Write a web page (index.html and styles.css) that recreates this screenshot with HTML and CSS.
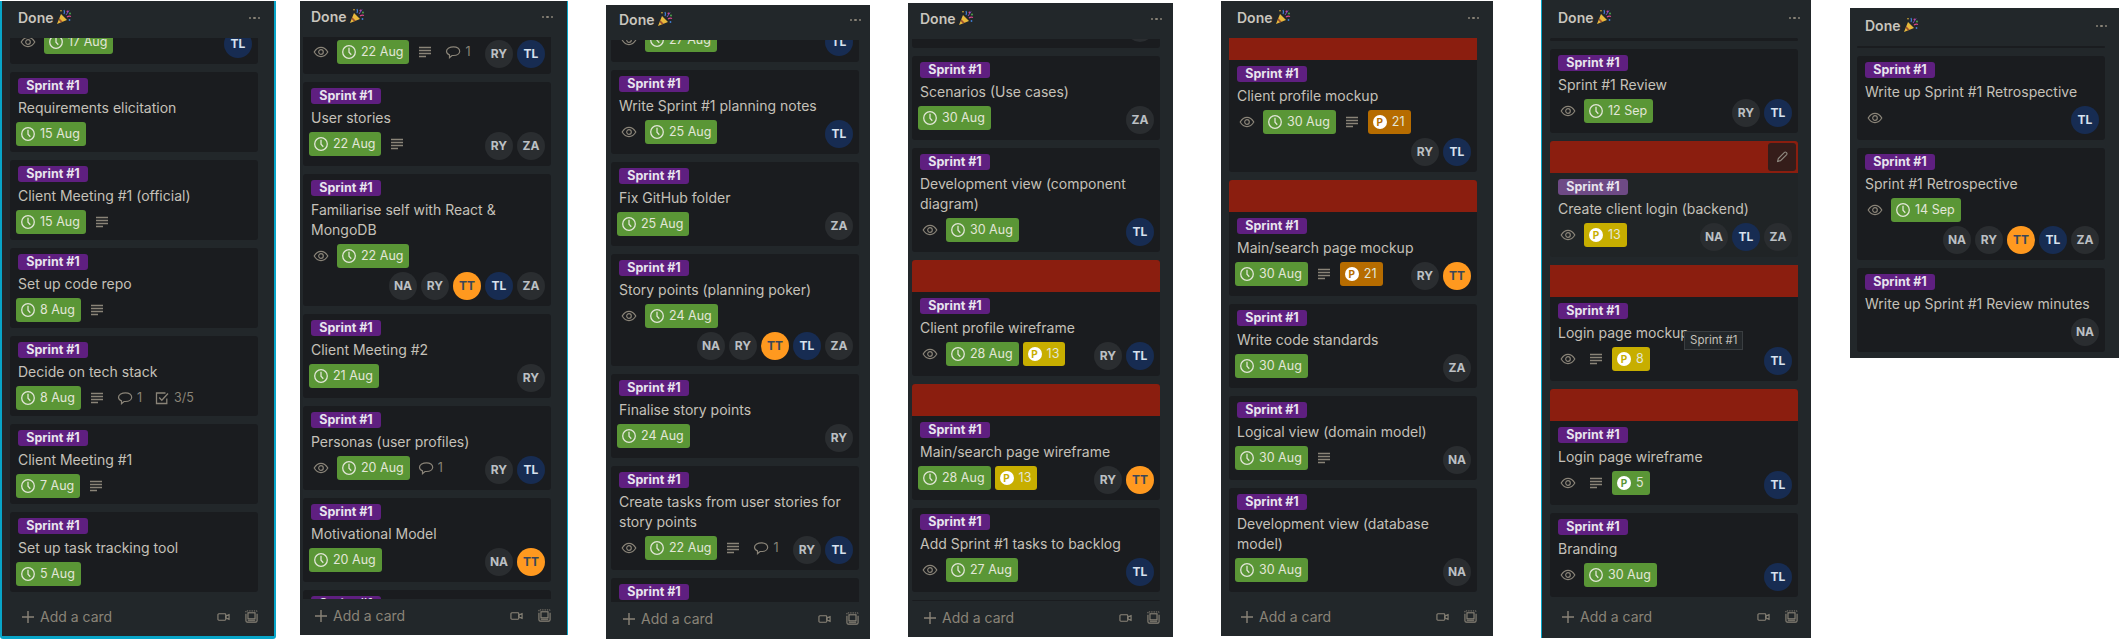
FILE: index.html
```html
<!DOCTYPE html>
<html lang="en">
<head>
    <meta charset="UTF-8">
    <meta name="viewport" content="width=device-width, initial-scale=1.0">
    <title>Done lists</title>
    <link rel="stylesheet" href="styles.css">
</head>
<body>
    <svg class="sprites" aria-hidden="true">
        <symbol id="i-eye" viewBox="0 0 16 16"><path d="M1.2 8C3 5 5.3 3.4 8 3.4S13 5 14.8 8C13 11 10.700 12.600 8 12.600S3 11 1.200 8z" fill="none" stroke="currentColor" stroke-width="1.200"/><circle cx="8" cy="8" r="2.300" fill="none" stroke="currentColor" stroke-width="1.200"/></symbol>
        <symbol id="i-clock" viewBox="0 0 16 16"><circle cx="8" cy="8" r="6.300" fill="none" stroke="currentColor" stroke-width="1.300"/><path d="M8 3.800V8.300L10.300 10.700" fill="none" stroke="currentColor" stroke-width="1.300"/></symbol>
        <symbol id="i-desc" viewBox="0 0 16 16"><path d="M2 3.500H14M2 6.500H14M2 9.500H14M2 12.500H9" fill="none" stroke="currentColor" stroke-width="1.300"/></symbol>
        <symbol id="i-comment" viewBox="0 0 16 16"><path d="M8.500 2.800C12 2.800 14.700 4.600 14.700 7.200S12 11.500 8.500 11.500H7L4.500 13.700V10.900C2.700 10.200 1.500 8.800 1.500 7.200 1.500 4.600 5 2.800 8.500 2.800z" fill="none" stroke="currentColor" stroke-width="1.200"/></symbol>
        <symbol id="i-check" viewBox="0 0 16 16"><path d="M12.800 8.500V13.500H2.500V3H11.500" fill="none" stroke="currentColor" stroke-width="1.300"/><path d="M5.200 7.500L7.800 10.200L14 3.500" fill="none" stroke="currentColor" stroke-width="1.300"/></symbol>
        <symbol id="i-plus" viewBox="0 0 12 12"><path d="M6 0V12M0 6H12" fill="none" stroke="currentColor" stroke-width="1.400"/></symbol>
        <symbol id="i-video" viewBox="0 0 14 10"><rect x="1" y="1.500" width="8.500" height="7" rx="1" fill="none" stroke="currentColor" stroke-width="1.200"/><path d="M9.500 4L13 2.500V7.500L9.500 6z" fill="none" stroke="currentColor" stroke-width="1.200"/></symbol>
        <symbol id="i-template" viewBox="0 0 14 14"><path d="M1 4V11.500Q1 13 2.500 13H11.500Q13 13 13 11.500V4" fill="none" stroke="currentColor" stroke-width="1.200"/><rect x="3.200" y="3" width="7.600" height="6.500" fill="none" stroke="currentColor" stroke-width="1.200"/><path d="M3 11H11" stroke="currentColor" stroke-width="1.200"/><path d="M1 2.500V1H13V2.500" fill="none" stroke="currentColor" stroke-width="1" stroke-dasharray="1.500 1"/></symbol>
        <symbol id="i-pencil" viewBox="0 0 16 16"><path d="M3 13L3.800 9.700L10.800 2.700Q11.700 1.900 12.700 2.700L13.300 3.300Q14.100 4.200 13.300 5.200L6.300 12.200z" fill="none" stroke="currentColor" stroke-width="1.300"/></symbol>
        <symbol id="i-popper" viewBox="0 0 16 16"><path d="M1 15L5 5L11 11z" fill="#e8b93c"/><path d="M3.300 9.300L6.700 12.700L4.900 13.400L2.600 11.100z" fill="#a0522d"/><path d="M8 5Q9 3 8 1" fill="none" stroke="#3f7fd6" stroke-width="1.200"/><path d="M11 8Q13 6.500 15 7.500" fill="none" stroke="#d8478a" stroke-width="1.200"/><circle cx="11.500" cy="2.500" r="1" fill="#d8478a"/><circle cx="14" cy="4.500" r=".900" fill="#4caf50"/><circle cx="5" cy="1.800" r=".800" fill="#e8b93c"/><circle cx="13.500" cy="11" r=".900" fill="#3f7fd6"/><path d="M10 6L13 1.500" stroke="#7a4fc0" stroke-width="1"/></symbol>
    </svg>

    <main class="board">
        <section class="list list-1">
            <header class="list-head"><h2>Done</h2><svg class="popper"><use href="#i-popper"/></svg><span class="dots"><i></i><i></i><i></i></span></header>
            <div class="cards">
                <div class="card card-cut cut-1">
                    <div class="foot">
                        <div class="badges"><span class="icon"><svg><use href="#i-eye"/></svg></span><span class="badge date"><svg><use href="#i-clock"/></svg>17 Aug</span></div>
                        <div class="members"><span class="avatar tl">TL</span></div>
                    </div>
                </div>
                <div class="card">
                    <span class="pill">Sprint #1</span>
                    <p class="title">Requirements elicitation</p>
                    <div class="foot"><div class="badges"><span class="badge date"><svg><use href="#i-clock"/></svg>15 Aug</span></div></div>
                </div>
                <div class="card">
                    <span class="pill">Sprint #1</span>
                    <p class="title">Client Meeting #1 (official)</p>
                    <div class="foot"><div class="badges"><span class="badge date"><svg><use href="#i-clock"/></svg>15 Aug</span><span class="icon"><svg><use href="#i-desc"/></svg></span></div></div>
                </div>
                <div class="card">
                    <span class="pill">Sprint #1</span>
                    <p class="title">Set up code repo</p>
                    <div class="foot"><div class="badges"><span class="badge date"><svg><use href="#i-clock"/></svg>8 Aug</span><span class="icon"><svg><use href="#i-desc"/></svg></span></div></div>
                </div>
                <div class="card">
                    <span class="pill">Sprint #1</span>
                    <p class="title">Decide on tech stack</p>
                    <div class="foot"><div class="badges"><span class="badge date"><svg><use href="#i-clock"/></svg>8 Aug</span><span class="icon"><svg><use href="#i-desc"/></svg></span><span class="count"><svg><use href="#i-comment"/></svg>1</span><span class="count"><svg><use href="#i-check"/></svg>3/5</span></div></div>
                </div>
                <div class="card">
                    <span class="pill">Sprint #1</span>
                    <p class="title">Client Meeting #1</p>
                    <div class="foot"><div class="badges"><span class="badge date"><svg><use href="#i-clock"/></svg>7 Aug</span><span class="icon"><svg><use href="#i-desc"/></svg></span></div></div>
                </div>
                <div class="card">
                    <span class="pill">Sprint #1</span>
                    <p class="title">Set up task tracking tool</p>
                    <div class="foot"><div class="badges"><span class="badge date"><svg><use href="#i-clock"/></svg>5 Aug</span></div></div>
                </div>
            </div>
            <footer class="list-foot"><svg class="plus"><use href="#i-plus"/></svg><span class="add">Add a card</span><svg class="video"><use href="#i-video"/></svg><svg class="template"><use href="#i-template"/></svg></footer>
        </section>

        <section class="list list-2">
            <header class="list-head"><h2>Done</h2><svg class="popper"><use href="#i-popper"/></svg><span class="dots"><i></i><i></i><i></i></span></header>
            <div class="cards">
                <div class="card card-cut cut-2">
                    <div class="foot">
                        <div class="badges"><span class="icon"><svg><use href="#i-eye"/></svg></span><span class="badge date"><svg><use href="#i-clock"/></svg>22 Aug</span><span class="icon"><svg><use href="#i-desc"/></svg></span><span class="count"><svg><use href="#i-comment"/></svg>1</span></div>
                        <div class="members"><span class="avatar">RY</span><span class="avatar tl">TL</span></div>
                    </div>
                </div>
                <div class="card">
                    <span class="pill">Sprint #1</span>
                    <p class="title">User stories</p>
                    <div class="foot">
                        <div class="badges"><span class="badge date"><svg><use href="#i-clock"/></svg>22 Aug</span><span class="icon"><svg><use href="#i-desc"/></svg></span></div>
                        <div class="members"><span class="avatar">RY</span><span class="avatar">ZA</span></div>
                    </div>
                </div>
                <div class="card">
                    <span class="pill">Sprint #1</span>
                    <p class="title">Familiarise self with React &amp; MongoDB</p>
                    <div class="foot">
                        <div class="badges"><span class="icon"><svg><use href="#i-eye"/></svg></span><span class="badge date"><svg><use href="#i-clock"/></svg>22 Aug</span></div>
                        <div class="members"><span class="avatar">NA</span><span class="avatar">RY</span><span class="avatar tt">TT</span><span class="avatar tl">TL</span><span class="avatar">ZA</span></div>
                    </div>
                </div>
                <div class="card">
                    <span class="pill">Sprint #1</span>
                    <p class="title">Client Meeting #2</p>
                    <div class="foot">
                        <div class="badges"><span class="badge date"><svg><use href="#i-clock"/></svg>21 Aug</span></div>
                        <div class="members"><span class="avatar">RY</span></div>
                    </div>
                </div>
                <div class="card">
                    <span class="pill">Sprint #1</span>
                    <p class="title">Personas (user profiles)</p>
                    <div class="foot">
                        <div class="badges"><span class="icon"><svg><use href="#i-eye"/></svg></span><span class="badge date"><svg><use href="#i-clock"/></svg>20 Aug</span><span class="count"><svg><use href="#i-comment"/></svg>1</span></div>
                        <div class="members"><span class="avatar">RY</span><span class="avatar tl">TL</span></div>
                    </div>
                </div>
                <div class="card">
                    <span class="pill">Sprint #1</span>
                    <p class="title">Motivational Model</p>
                    <div class="foot">
                        <div class="badges"><span class="badge date"><svg><use href="#i-clock"/></svg>20 Aug</span></div>
                        <div class="members"><span class="avatar">NA</span><span class="avatar tt">TT</span></div>
                    </div>
                </div>
                <div class="card"><span class="pill">Sprint #1</span></div>
            </div>
            <footer class="list-foot"><svg class="plus"><use href="#i-plus"/></svg><span class="add">Add a card</span><svg class="video"><use href="#i-video"/></svg><svg class="template"><use href="#i-template"/></svg></footer>
        </section>

        <section class="list list-3">
            <header class="list-head"><h2>Done</h2><svg class="popper"><use href="#i-popper"/></svg><span class="dots"><i></i><i></i><i></i></span></header>
            <div class="cards">
                <div class="card card-cut cut-3">
                    <div class="foot">
                        <div class="badges"><span class="icon"><svg><use href="#i-eye"/></svg></span><span class="badge date"><svg><use href="#i-clock"/></svg>27 Aug</span></div>
                        <div class="members"><span class="avatar tl">TL</span></div>
                    </div>
                </div>
                <div class="card">
                    <span class="pill">Sprint #1</span>
                    <p class="title">Write Sprint #1 planning notes</p>
                    <div class="foot">
                        <div class="badges"><span class="icon"><svg><use href="#i-eye"/></svg></span><span class="badge date"><svg><use href="#i-clock"/></svg>25 Aug</span></div>
                        <div class="members"><span class="avatar tl">TL</span></div>
                    </div>
                </div>
                <div class="card">
                    <span class="pill">Sprint #1</span>
                    <p class="title">Fix GitHub folder</p>
                    <div class="foot">
                        <div class="badges"><span class="badge date"><svg><use href="#i-clock"/></svg>25 Aug</span></div>
                        <div class="members"><span class="avatar">ZA</span></div>
                    </div>
                </div>
                <div class="card">
                    <span class="pill">Sprint #1</span>
                    <p class="title">Story points (planning poker)</p>
                    <div class="foot">
                        <div class="badges"><span class="icon"><svg><use href="#i-eye"/></svg></span><span class="badge date"><svg><use href="#i-clock"/></svg>24 Aug</span></div>
                        <div class="members"><span class="avatar">NA</span><span class="avatar">RY</span><span class="avatar tt">TT</span><span class="avatar tl">TL</span><span class="avatar">ZA</span></div>
                    </div>
                </div>
                <div class="card">
                    <span class="pill">Sprint #1</span>
                    <p class="title">Finalise story points</p>
                    <div class="foot">
                        <div class="badges"><span class="badge date"><svg><use href="#i-clock"/></svg>24 Aug</span></div>
                        <div class="members"><span class="avatar">RY</span></div>
                    </div>
                </div>
                <div class="card">
                    <span class="pill">Sprint #1</span>
                    <p class="title">Create tasks from user stories for story points</p>
                    <div class="foot">
                        <div class="badges"><span class="icon"><svg><use href="#i-eye"/></svg></span><span class="badge date"><svg><use href="#i-clock"/></svg>22 Aug</span><span class="icon"><svg><use href="#i-desc"/></svg></span><span class="count"><svg><use href="#i-comment"/></svg>1</span></div>
                        <div class="members"><span class="avatar">RY</span><span class="avatar tl">TL</span></div>
                    </div>
                </div>
                <div class="card"><span class="pill">Sprint #1</span></div>
            </div>
            <footer class="list-foot"><svg class="plus"><use href="#i-plus"/></svg><span class="add">Add a card</span><svg class="video"><use href="#i-video"/></svg><svg class="template"><use href="#i-template"/></svg></footer>
        </section>

        <section class="list list-4">
            <header class="list-head"><h2>Done</h2><svg class="popper"><use href="#i-popper"/></svg><span class="dots"><i></i><i></i><i></i></span></header>
            <div class="cards">
                <div class="card card-cut cut-4">
                    <div class="foot"><div class="members"><span class="avatar"></span></div></div>
                </div>
                <div class="card">
                    <span class="pill">Sprint #1</span>
                    <p class="title">Scenarios (Use cases)</p>
                    <div class="foot">
                        <div class="badges"><span class="badge date"><svg><use href="#i-clock"/></svg>30 Aug</span></div>
                        <div class="members"><span class="avatar">ZA</span></div>
                    </div>
                </div>
                <div class="card">
                    <span class="pill">Sprint #1</span>
                    <p class="title">Development view (component diagram)</p>
                    <div class="foot">
                        <div class="badges"><span class="icon"><svg><use href="#i-eye"/></svg></span><span class="badge date"><svg><use href="#i-clock"/></svg>30 Aug</span></div>
                        <div class="members"><span class="avatar tl">TL</span></div>
                    </div>
                </div>
                <div class="card">
                    <div class="cover"></div>
                    <span class="pill">Sprint #1</span>
                    <p class="title">Client profile wireframe</p>
                    <div class="foot">
                        <div class="badges"><span class="icon"><svg><use href="#i-eye"/></svg></span><span class="badge date"><svg><use href="#i-clock"/></svg>28 Aug</span><span class="badge points yellow"><b>P</b>13</span></div>
                        <div class="members"><span class="avatar">RY</span><span class="avatar tl">TL</span></div>
                    </div>
                </div>
                <div class="card">
                    <div class="cover"></div>
                    <span class="pill">Sprint #1</span>
                    <p class="title">Main/search page wireframe</p>
                    <div class="foot">
                        <div class="badges"><span class="badge date"><svg><use href="#i-clock"/></svg>28 Aug</span><span class="badge points yellow"><b>P</b>13</span></div>
                        <div class="members"><span class="avatar">RY</span><span class="avatar tt">TT</span></div>
                    </div>
                </div>
                <div class="card">
                    <span class="pill">Sprint #1</span>
                    <p class="title">Add Sprint #1 tasks to backlog</p>
                    <div class="foot">
                        <div class="badges"><span class="icon"><svg><use href="#i-eye"/></svg></span><span class="badge date"><svg><use href="#i-clock"/></svg>27 Aug</span></div>
                        <div class="members"><span class="avatar tl">TL</span></div>
                    </div>
                </div>
                <div class="card card-stub"></div>
            </div>
            <footer class="list-foot"><svg class="plus"><use href="#i-plus"/></svg><span class="add">Add a card</span><svg class="video"><use href="#i-video"/></svg><svg class="template"><use href="#i-template"/></svg></footer>
        </section>

        <section class="list list-5">
            <header class="list-head"><h2>Done</h2><svg class="popper"><use href="#i-popper"/></svg><span class="dots"><i></i><i></i><i></i></span></header>
            <div class="cards">
                <div class="card cut-5">
                    <div class="cover"></div>
                    <span class="pill">Sprint #1</span>
                    <p class="title">Client profile mockup</p>
                    <div class="foot">
                        <div class="badges"><span class="icon"><svg><use href="#i-eye"/></svg></span><span class="badge date"><svg><use href="#i-clock"/></svg>30 Aug</span><span class="icon"><svg><use href="#i-desc"/></svg></span><span class="badge points orange"><b>P</b>21</span></div>
                        <div class="members members-wrap"><span class="avatar">RY</span><span class="avatar tl">TL</span></div>
                    </div>
                </div>
                <div class="card">
                    <div class="cover"></div>
                    <span class="pill">Sprint #1</span>
                    <p class="title">Main/search page mockup</p>
                    <div class="foot">
                        <div class="badges"><span class="badge date"><svg><use href="#i-clock"/></svg>30 Aug</span><span class="icon"><svg><use href="#i-desc"/></svg></span><span class="badge points orange"><b>P</b>21</span></div>
                        <div class="members"><span class="avatar">RY</span><span class="avatar tt">TT</span></div>
                    </div>
                </div>
                <div class="card">
                    <span class="pill">Sprint #1</span>
                    <p class="title">Write code standards</p>
                    <div class="foot">
                        <div class="badges"><span class="badge date"><svg><use href="#i-clock"/></svg>30 Aug</span></div>
                        <div class="members"><span class="avatar">ZA</span></div>
                    </div>
                </div>
                <div class="card">
                    <span class="pill">Sprint #1</span>
                    <p class="title">Logical view (domain model)</p>
                    <div class="foot">
                        <div class="badges"><span class="badge date"><svg><use href="#i-clock"/></svg>30 Aug</span><span class="icon"><svg><use href="#i-desc"/></svg></span></div>
                        <div class="members"><span class="avatar">NA</span></div>
                    </div>
                </div>
                <div class="card">
                    <span class="pill">Sprint #1</span>
                    <p class="title">Development view (database model)</p>
                    <div class="foot">
                        <div class="badges"><span class="badge date"><svg><use href="#i-clock"/></svg>30 Aug</span></div>
                        <div class="members"><span class="avatar">NA</span></div>
                    </div>
                </div>
            </div>
            <footer class="list-foot"><svg class="plus"><use href="#i-plus"/></svg><span class="add">Add a card</span><svg class="video"><use href="#i-video"/></svg><svg class="template"><use href="#i-template"/></svg></footer>
        </section>

        <section class="list list-6">
            <header class="list-head"><h2>Done</h2><svg class="popper"><use href="#i-popper"/></svg><span class="dots"><i></i><i></i><i></i></span></header>
            <div class="cards">
                <div class="card card-stub"></div>
                <div class="card">
                    <span class="pill">Sprint #1</span>
                    <p class="title">Sprint #1 Review</p>
                    <div class="foot">
                        <div class="badges"><span class="icon"><svg><use href="#i-eye"/></svg></span><span class="badge date"><svg><use href="#i-clock"/></svg>12 Sep</span></div>
                        <div class="members"><span class="avatar">RY</span><span class="avatar tl">TL</span></div>
                    </div>
                </div>
                <div class="card card-hover">
                    <div class="cover"><span class="edit"><svg><use href="#i-pencil"/></svg></span></div>
                    <span class="pill">Sprint #1</span>
                    <p class="title">Create client login (backend)</p>
                    <div class="foot">
                        <div class="badges"><span class="icon"><svg><use href="#i-eye"/></svg></span><span class="badge points yellow"><b>P</b>13</span></div>
                        <div class="members"><span class="avatar">NA</span><span class="avatar tl">TL</span><span class="avatar">ZA</span></div>
                    </div>
                </div>
                <div class="card card-tip">
                    <div class="cover"></div>
                    <span class="pill">Sprint #1</span>
                    <p class="title">Login page mockup<span class="tooltip">Sprint #1</span></p>
                    <div class="foot">
                        <div class="badges"><span class="icon"><svg><use href="#i-eye"/></svg></span><span class="icon"><svg><use href="#i-desc"/></svg></span><span class="badge points yellow"><b>P</b>8</span></div>
                        <div class="members"><span class="avatar tl">TL</span></div>
                    </div>
                </div>
                <div class="card">
                    <div class="cover"></div>
                    <span class="pill">Sprint #1</span>
                    <p class="title">Login page wireframe</p>
                    <div class="foot">
                        <div class="badges"><span class="icon"><svg><use href="#i-eye"/></svg></span><span class="icon"><svg><use href="#i-desc"/></svg></span><span class="badge points green"><b>P</b>5</span></div>
                        <div class="members"><span class="avatar tl">TL</span></div>
                    </div>
                </div>
                <div class="card">
                    <span class="pill">Sprint #1</span>
                    <p class="title">Branding</p>
                    <div class="foot">
                        <div class="badges"><span class="icon"><svg><use href="#i-eye"/></svg></span><span class="badge date"><svg><use href="#i-clock"/></svg>30 Aug</span></div>
                        <div class="members"><span class="avatar tl">TL</span></div>
                    </div>
                </div>
            </div>
            <footer class="list-foot"><svg class="plus"><use href="#i-plus"/></svg><span class="add">Add a card</span><svg class="video"><use href="#i-video"/></svg><svg class="template"><use href="#i-template"/></svg></footer>
        </section>

        <section class="list list-7">
            <header class="list-head"><h2>Done</h2><svg class="popper"><use href="#i-popper"/></svg><span class="dots"><i></i><i></i><i></i></span></header>
            <div class="cards">
                <div class="card card-stub"></div>
                <div class="card">
                    <span class="pill">Sprint #1</span>
                    <p class="title">Write up Sprint #1 Retrospective</p>
                    <div class="foot">
                        <div class="badges"><span class="icon"><svg><use href="#i-eye"/></svg></span></div>
                        <div class="members"><span class="avatar tl">TL</span></div>
                    </div>
                </div>
                <div class="card">
                    <span class="pill">Sprint #1</span>
                    <p class="title">Sprint #1 Retrospective</p>
                    <div class="foot">
                        <div class="badges"><span class="icon"><svg><use href="#i-eye"/></svg></span><span class="badge date"><svg><use href="#i-clock"/></svg>14 Sep</span></div>
                        <div class="members"><span class="avatar">NA</span><span class="avatar">RY</span><span class="avatar tt">TT</span><span class="avatar tl">TL</span><span class="avatar">ZA</span></div>
                    </div>
                </div>
                <div class="card">
                    <span class="pill">Sprint #1</span>
                    <p class="title">Write up Sprint #1 Review minutes</p>
                    <div class="foot"><div class="members"><span class="avatar">NA</span></div></div>
                </div>
            </div>
        </section>
    </main>
</body>
</html>
```

FILE: styles.css
```css
* {
    box-sizing: border-box;
}

body {
    margin: 0;
    height: 639px;
    overflow: hidden;
    background-color: #ffffff;
    font-family: Inter, "Liberation Sans", sans-serif;
    font-size: 14px;
    line-height: 20px;
    color: #c5c1b9;
}

.sprites {
    display: none;
}

.board {
    display: flex;
    align-items: flex-start;
}

/* list columns: each one is a separate crop, so they have their own offsets */
.list {
    display: flex;
    flex-direction: column;
    flex: none;
    overflow: hidden;
    background-color: #22272a;
}

.list-1 {
    width: 276px;
    height: 638px;
    margin-top: 1px;
    padding-left: 8px;
    border: solid #08a5c8;
    border-width: 0 2px 3px 2px;
    border-radius: 0 0 3px 3px;
}

.list-2 {
    width: 268px;
    height: 634px;
    margin: 1px 0 0 24px;
    padding-left: 3px;
    border-right: 1px solid #08a5c8;
}

.list-3 {
    width: 264px;
    height: 634px;
    margin: 5px 0 0 38px;
    padding-left: 5px;
}

.list-4 {
    width: 265px;
    height: 634px;
    margin: 3px 0 0 38px;
    padding-left: 4px;
}

.list-5 {
    width: 272px;
    height: 635px;
    margin: 1px 0 0 48px;
    padding-left: 8px;
}

.list-6 {
    width: 270px;
    height: 638px;
    margin-left: 48px;
    padding-left: 8px;
    border-left: 1px solid #08a5c8;
}

.list-7 {
    width: 269px;
    height: 350px;
    margin: 8px 0 0 39px;
    padding-left: 7px;
}

.list-head {
    display: flex;
    align-items: flex-end;
    flex: none;
    width: 248px;
    height: 37px;
    padding: 0 8px 10px;
}

.list-2 .list-head,
.list-4 .list-head {
    height: 36px;
}

.list-3 .list-head {
    height: 35px;
}

.list-6 .list-head,
.list-7 .list-head {
    height: 38px;
}

.list-head h2 {
    margin: 0;
    font-size: 14px;
    font-weight: 600;
    line-height: 20px;
    color: #c9c5bd;
}

.popper {
    width: 16px;
    height: 16px;
    margin: 0 0 3px 3px;
}

.dots {
    display: flex;
    gap: 2px;
    margin: 0 -10px 9px auto;
}

.dots i {
    width: 2.500px;
    height: 2.500px;
    border-radius: 50%;
    background-color: #8a8478;
}

.cards {
    flex: none;
    width: 248px;
    height: 562px;
    overflow: hidden;
}

.list-7 .cards {
    height: auto;
}

.card {
    position: relative;
    margin-bottom: 8px;
    padding: 6px 8px;
    background-color: #1a1c1f;
    border-radius: 3px;
    overflow: hidden;
}

.card-cut {
    padding-top: 0;
    border-radius: 0 0 3px 3px;
}

.cut-1 {
    margin-top: -8px;
}

.cut-2 {
    padding-top: 3px;
}

.cut-3 {
    margin-top: -12px;
}

.cut-4 {
    margin-top: -25px;
}

.cut-5 {
    margin-top: -10px;
}

.card-stub {
    height: 3px;
    padding: 0;
}

.list-7 .card-stub {
    height: 2px;
}

.card-hover {
    background-color: #202426;
}

.card-tip {
    overflow: visible;
}

.cover {
    position: relative;
    height: 32px;
    margin: -6px -8px 6px;
    background-color: #8b1e0f;
}

.edit {
    position: absolute;
    top: 2px;
    right: 2px;
    display: flex;
    align-items: center;
    justify-content: center;
    width: 28px;
    height: 28px;
    background-color: #351d1a;
    border-radius: 3px;
    color: #8f8a80;
}

.edit svg {
    width: 14px;
    height: 14px;
}

.pill {
    display: block;
    width: 70px;
    height: 16px;
    background-color: #5f1f80;
    border-radius: 3px;
    font-size: 12.500px;
    font-weight: 700;
    line-height: 16px;
    text-align: center;
    color: #e8e4ee;
}

.card-hover .pill {
    background-color: #6e4a85;
}

.title {
    position: relative;
    margin: 4px 0 4px;
    font-size: 14px;
    line-height: 20px;
}

.tooltip {
    position: absolute;
    top: 8px;
    left: 126px;
    height: 19px;
    padding: 0 5px;
    background-color: #23272a;
    border: 1px solid #3a3e41;
    font-size: 11.500px;
    line-height: 17px;
    color: #c5c1b9;
    white-space: nowrap;
    z-index: 2;
}

.foot {
    display: flex;
    flex-wrap: wrap;
    row-gap: 4px;
    margin: 0 -2px;
}

.badges {
    display: flex;
    align-items: center;
    height: 24px;
}

.icon {
    display: flex;
    align-items: center;
    justify-content: center;
    width: 24px;
    height: 24px;
    margin-right: 4px;
    color: #8a8478;
}

.icon svg {
    width: 16px;
    height: 16px;
}

.badge {
    display: flex;
    align-items: center;
    height: 24px;
    margin-right: 4px;
    padding: 0 6px 0 4px;
    border-radius: 3px;
    font-size: 12.500px;
    line-height: 24px;
    color: #e2e6d8;
}

.badge svg {
    width: 16px;
    height: 16px;
    margin-right: 4px;
}

.date,
.green {
    background-color: #5a9636;
}

.yellow {
    background-color: #c7ae00;
}

.orange {
    background-color: #b66c00;
}

.points b {
    display: block;
    width: 14px;
    height: 14px;
    margin: 0 5px 0 1px;
    background-color: #ffffff;
    border-radius: 50%;
    font-size: 10px;
    font-weight: 700;
    line-height: 14px;
    text-align: center;
}

.yellow b {
    color: #c7ae00;
}

.orange b {
    color: #b66c00;
}

.green b {
    color: #5a9636;
}

.count {
    display: flex;
    align-items: center;
    height: 24px;
    margin-right: 4px;
    padding: 0 4px;
    font-size: 12.500px;
    line-height: 24px;
    color: #8a8478;
}

.count svg {
    width: 16px;
    height: 16px;
    margin-right: 4px;
}

.members {
    display: flex;
    gap: 4px;
    margin-left: auto;
}

.members-wrap {
    width: 100%;
    justify-content: flex-end;
}

.avatar {
    display: block;
    width: 28px;
    height: 28px;
    background-color: #2a2d30;
    border-radius: 50%;
    font-size: 12px;
    font-weight: 700;
    line-height: 28px;
    text-align: center;
    color: #bcc0c4;
}

.tl {
    background-color: #172c52;
    color: #d8e2ee;
}

.tt {
    background-color: #ff991f;
    color: #3a4658;
}

.list-foot {
    display: flex;
    align-items: flex-start;
    flex: 1;
    width: 248px;
    padding-top: 7px;
    color: #8a8478;
}

.list-foot svg {
    flex: none;
}

.plus {
    width: 12px;
    height: 12px;
    margin: 4px 0 0 12px;
}

.add {
    margin-left: 6px;
    line-height: 20px;
}

.video {
    width: 13px;
    height: 10px;
    margin: 5px 15px 0 auto;
}

.template {
    width: 13px;
    height: 13px;
    margin-top: 3px;
}
```
